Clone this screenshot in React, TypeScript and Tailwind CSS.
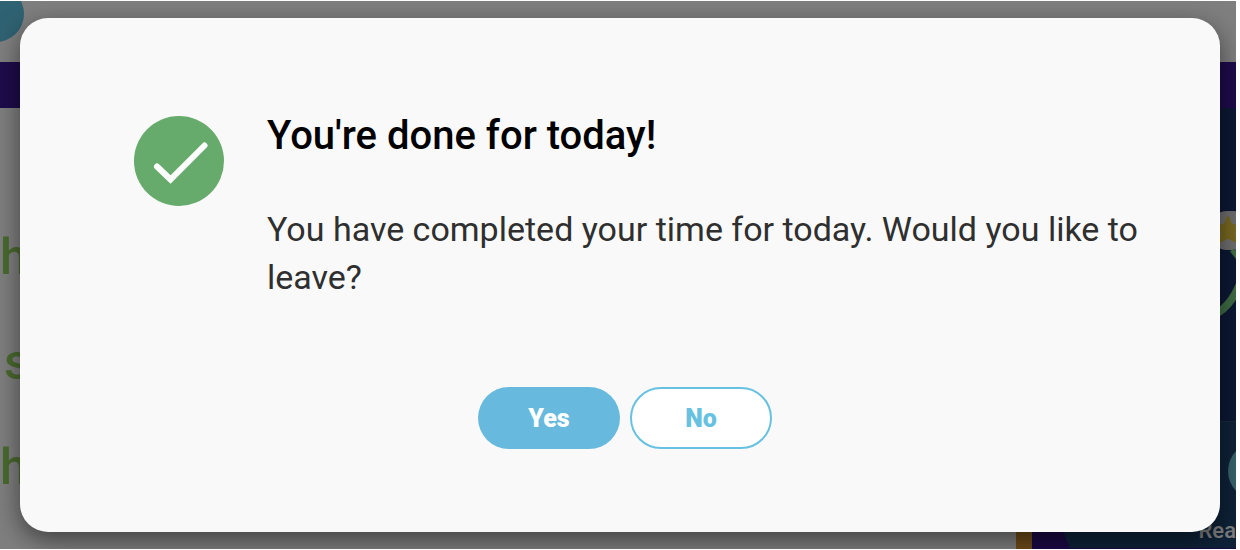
import React from 'react';

const words = [
  { text: 'h', indent: 'pl-0' },
  { text: 's', indent: 'pl-1' },
  { text: 'h', indent: 'pl-0' },
];

const CheckBadge: React.FC = () => (
  <svg className="w-[90px] h-[90px] flex-shrink-0" viewBox="0 0 90 90" aria-hidden="true">
    <circle cx="45" cy="45" r="45" fill="#66ab6b" />
    <path
      d="M23 50.500 L36.500 63.500 L70.500 29.500"
      fill="none"
      stroke="#fff"
      strokeWidth="6"
      strokeLinecap="round"
      strokeLinejoin="miter"
    />
  </svg>
);

// star badge, progress ring and avatar at the right end of the side panel
const SideArt: React.FC = () => (
  <svg className="absolute top-0 right-0 w-[204px] h-[440px]" viewBox="0 0 204 440" aria-hidden="true">
    <path d="M0 0 H204 V440 H38 Q30 424 26 400 V0 Z" fill="#183068" />
    <path d="M26 313 H204 V440 H38 Q30 424 26 400 Z" fill="#1c4470" />
    <path d="M26 313.500 H204" stroke="#30557e" />
    <rect x="178" y="103" width="40" height="39" rx="17" fill="#dcdcdc" />
    <path
      d="M196 109 L199.500 117 L208 118 L202 124.500 L204 134 L196 129.500 L188 134 L190 124.500 L184 118 L192.500 117 Z"
      fill="#f0d040"
      stroke="#f0d040"
      strokeWidth="2"
      strokeLinejoin="round"
    />
    <path d="M180 208 Q198 200 208 176" fill="none" stroke="#7fd886" strokeWidth="8" />
    <path d="M200 142 L208 152" fill="none" stroke="#7fd886" strokeWidth="5" />
    <circle cx="225" cy="363" r="29" fill="#70c4d8" />
  </svg>
);

const Backdrop: React.FC = () => (
  <div className="absolute inset-0 flex flex-col overflow-hidden bg-white" aria-hidden="true">
    <div className="h-[61px] flex-shrink-0">
      <div className="w-14 h-14 -ml-8 -mt-[15px] rounded-full bg-[#5ec4e4]" />
    </div>
    <div className="h-[46px] flex-shrink-0 bg-[#3c1696]" />
    <div className="flex flex-1 min-h-0">
      <div className="flex-1 pt-[97px] text-[50px] leading-[105px] font-medium text-[#94d45c]">
        {words.map((word, idx) => (
          <div key={idx} className={word.indent}>{word.text}</div>
        ))}
      </div>
      <div className="w-4 bg-[#dc9632]" />
      <div className="relative w-[204px] flex flex-col justify-end items-end overflow-hidden bg-[#36128a]">
        <SideArt />
        <span className="relative text-[22px] leading-8 pb-0.5 font-medium text-white">Rea</span>
      </div>
    </div>
  </div>
);

const App: React.FC = () => {
  return (
    <div className="h-screen bg-white pt-px pr-1 pb-px font-['Roboto','Liberation_Sans',sans-serif]">
      <div className="relative h-full overflow-hidden">
        <Backdrop />
        <div className="absolute inset-0 bg-black/50 flex items-center pl-5 pr-4">
          <div
            role="dialog"
            aria-labelledby="done-title"
            aria-describedby="done-text"
            className="w-full rounded-[28px] bg-[#f9f9f9] pt-[92px] pb-[83px] shadow-[0_8px_26px_0_rgba(0,0,0,0.5)]"
          >
            <div className="flex pl-[114px] pr-16">
              <div className="pt-1.5">
                <CheckBadge />
              </div>
              <div className="flex-1 pl-[43px]">
                <h2 id="done-title" className="pt-0.5 text-[40px] leading-[48px] font-medium text-black">
                  You're done for today!
                </h2>
                <p id="done-text" className="mt-[45px] text-[34px] leading-[48px] text-[#2f2f2f]">
                  You have completed your time for today. Would you like to leave?
                </p>
              </div>
            </div>
            <div className="flex justify-center gap-2.5 mt-[86px] pl-2.5">
              <button type="button" className="w-[142px] h-[62px] pt-0.5 rounded-full bg-[#67badd] text-[25px] font-black text-white">
                Yes
              </button>
              <button type="button" className="w-[142px] h-[62px] pt-0.5 rounded-full border-2 border-[#67c1e0] bg-white text-[25px] font-black text-[#67c1e0]">
                No
              </button>
            </div>
          </div>
        </div>
      </div>
    </div>
  );
};

export default App;
